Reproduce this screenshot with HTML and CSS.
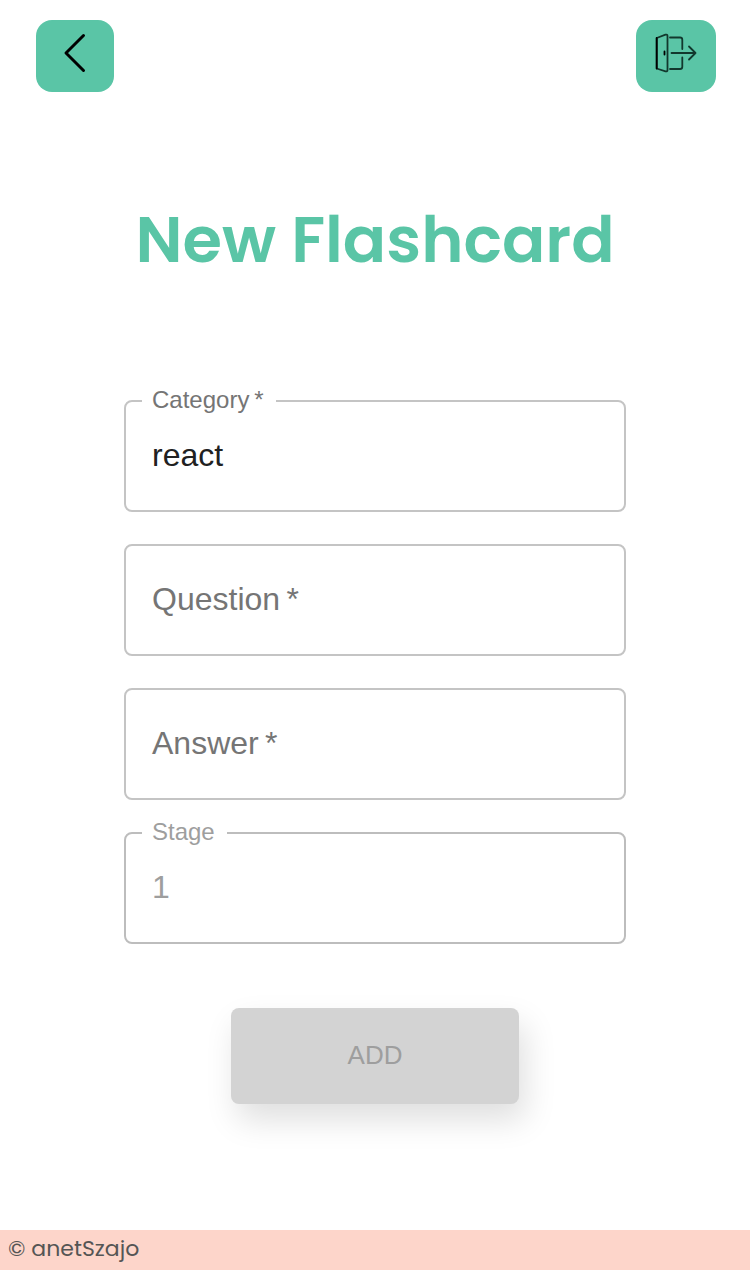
FILE: index.html
```html
<!DOCTYPE html>
<html lang="en">
<head>
<meta charset="utf-8">
<meta name="viewport" content="width=device-width, initial-scale=1">
<title>New Flashcard</title>
<link rel="stylesheet" href="styles.css">
</head>
<body>
<header class="topbar">
  <button class="nav-button" type="button" aria-label="Back">
    <svg class="nav-icon" viewBox="0 0 42 42" fill="none" stroke="#000" stroke-width="3" stroke-linecap="round" stroke-linejoin="round" aria-hidden="true"><path d="M29.500 3.500 12 21l17.500 17.500"/></svg>
  </button>
  <button class="nav-button nav-button-wide" type="button" aria-label="Log out">
    <svg class="nav-icon" viewBox="0 0 42 42" fill="none" stroke="#12382d" stroke-width="1.800" stroke-linecap="round" stroke-linejoin="round" aria-hidden="true"><path d="M1.700 6 10.500 2.700q2-.5 2 1.300v34q0 1.800-2 1.300L1.700 36.500Z"/><path d="M1.700 6v30.500M9.500 19.500v3" stroke="#000"/><path d="M15 5.500h10q2.300 0 2.300 2.300v9.200M27.300 25.500v9.200q0 2.300-2.300 2.300H15"/><path d="M16.500 21h24M34 14.500l6.500 6.500-6.500 6.500"/></svg>
  </button>
</header>
<main class="content">
  <h1 class="title">New Flashcard</h1>
  <form class="card-form">
    <div class="field field-filled">
      <label class="field-label" for="category">Category&thinsp;*</label>
      <input class="field-input" id="category" type="text" value="react" required>
    </div>
    <div class="field">
      <label class="field-label" for="question">Question&thinsp;*</label>
      <input class="field-input" id="question" type="text" required>
    </div>
    <div class="field">
      <label class="field-label" for="answer">Answer&thinsp;*</label>
      <input class="field-input" id="answer" type="text" required>
    </div>
    <div class="field field-filled field-disabled">
      <label class="field-label" for="stage">Stage</label>
      <input class="field-input" id="stage" type="text" value="1" disabled>
    </div>
    <button class="submit" type="submit" disabled>ADD</button>
  </form>
</main>
<footer class="footer">© anetSzajo</footer>
</body>
</html>
```
FILE: styles.css
```css
* {
  box-sizing: border-box;
}

body {
  display: flex;
  flex-direction: column;
  min-height: 100vh;
  margin: 0;
  background: #fff;
  font-family: "Liberation Sans", Arial, sans-serif;
}

.topbar {
  display: flex;
  justify-content: space-between;
  padding: 20px 34px 0 36px;
}

.nav-button {
  display: flex;
  justify-content: center;
  padding: 12px 18px 18px;
  border: 0;
  border-radius: 16px;
  background: #5ac5a6;
}

.nav-button-wide {
  width: 80px;
}

.nav-icon {
  width: 42px;
  height: 42px;
}

.content {
  flex: 1;
  padding: 100px 24px 0;
}

.title {
  margin: 0 0 112px;
  color: #5ac5a6;
  font-family: Poppins, Inter, sans-serif;
  font-size: 64px;
  font-weight: 600;
  line-height: 96px;
  text-align: center;
}

.card-form {
  display: flex;
  flex-direction: column;
  gap: 32px;
  max-width: 502px;
  margin: 0 auto;
}

.field {
  position: relative;
}

.field-input {
  display: block;
  width: 100%;
  height: 112px;
  padding: 0 26px 2px;
  border: 2px solid #c4c4c4;
  border-radius: 8px;
  background: #fff;
  color: #212121;
  font: 32px "Liberation Sans", Arial, sans-serif;
}

.field-label {
  position: absolute;
  top: 35px;
  left: 18px;
  padding: 0 12px 0 10px;
  background: #fff;
  color: #757575;
  font-size: 32px;
  line-height: 40px;
}

.field-filled .field-label {
  top: -16px;
  font-size: 24px;
  line-height: 32px;
}

.field-disabled .field-label,
.field-disabled .field-input {
  color: #9e9e9e;
}

.field-disabled .field-input {
  border-color: #bdbdbd;
}

.submit {
  align-self: center;
  width: 288px;
  max-width: 100%;
  height: 96px;
  margin-top: 32px;
  padding: 0 0 2px;
  border: 0;
  border-radius: 8px;
  background: #d3d3d3;
  box-shadow: 6px 16px 32px rgba(0, 0, 0, 0.13);
  color: #9e9e9e;
  font: 26px "Liberation Sans", Arial, sans-serif;
}

.footer {
  padding: 0 8px 2px;
  background: #fdd5ca;
  color: #555;
  font-family: Poppins, Inter, sans-serif;
  font-size: 22px;
  line-height: 38px;
}
```
